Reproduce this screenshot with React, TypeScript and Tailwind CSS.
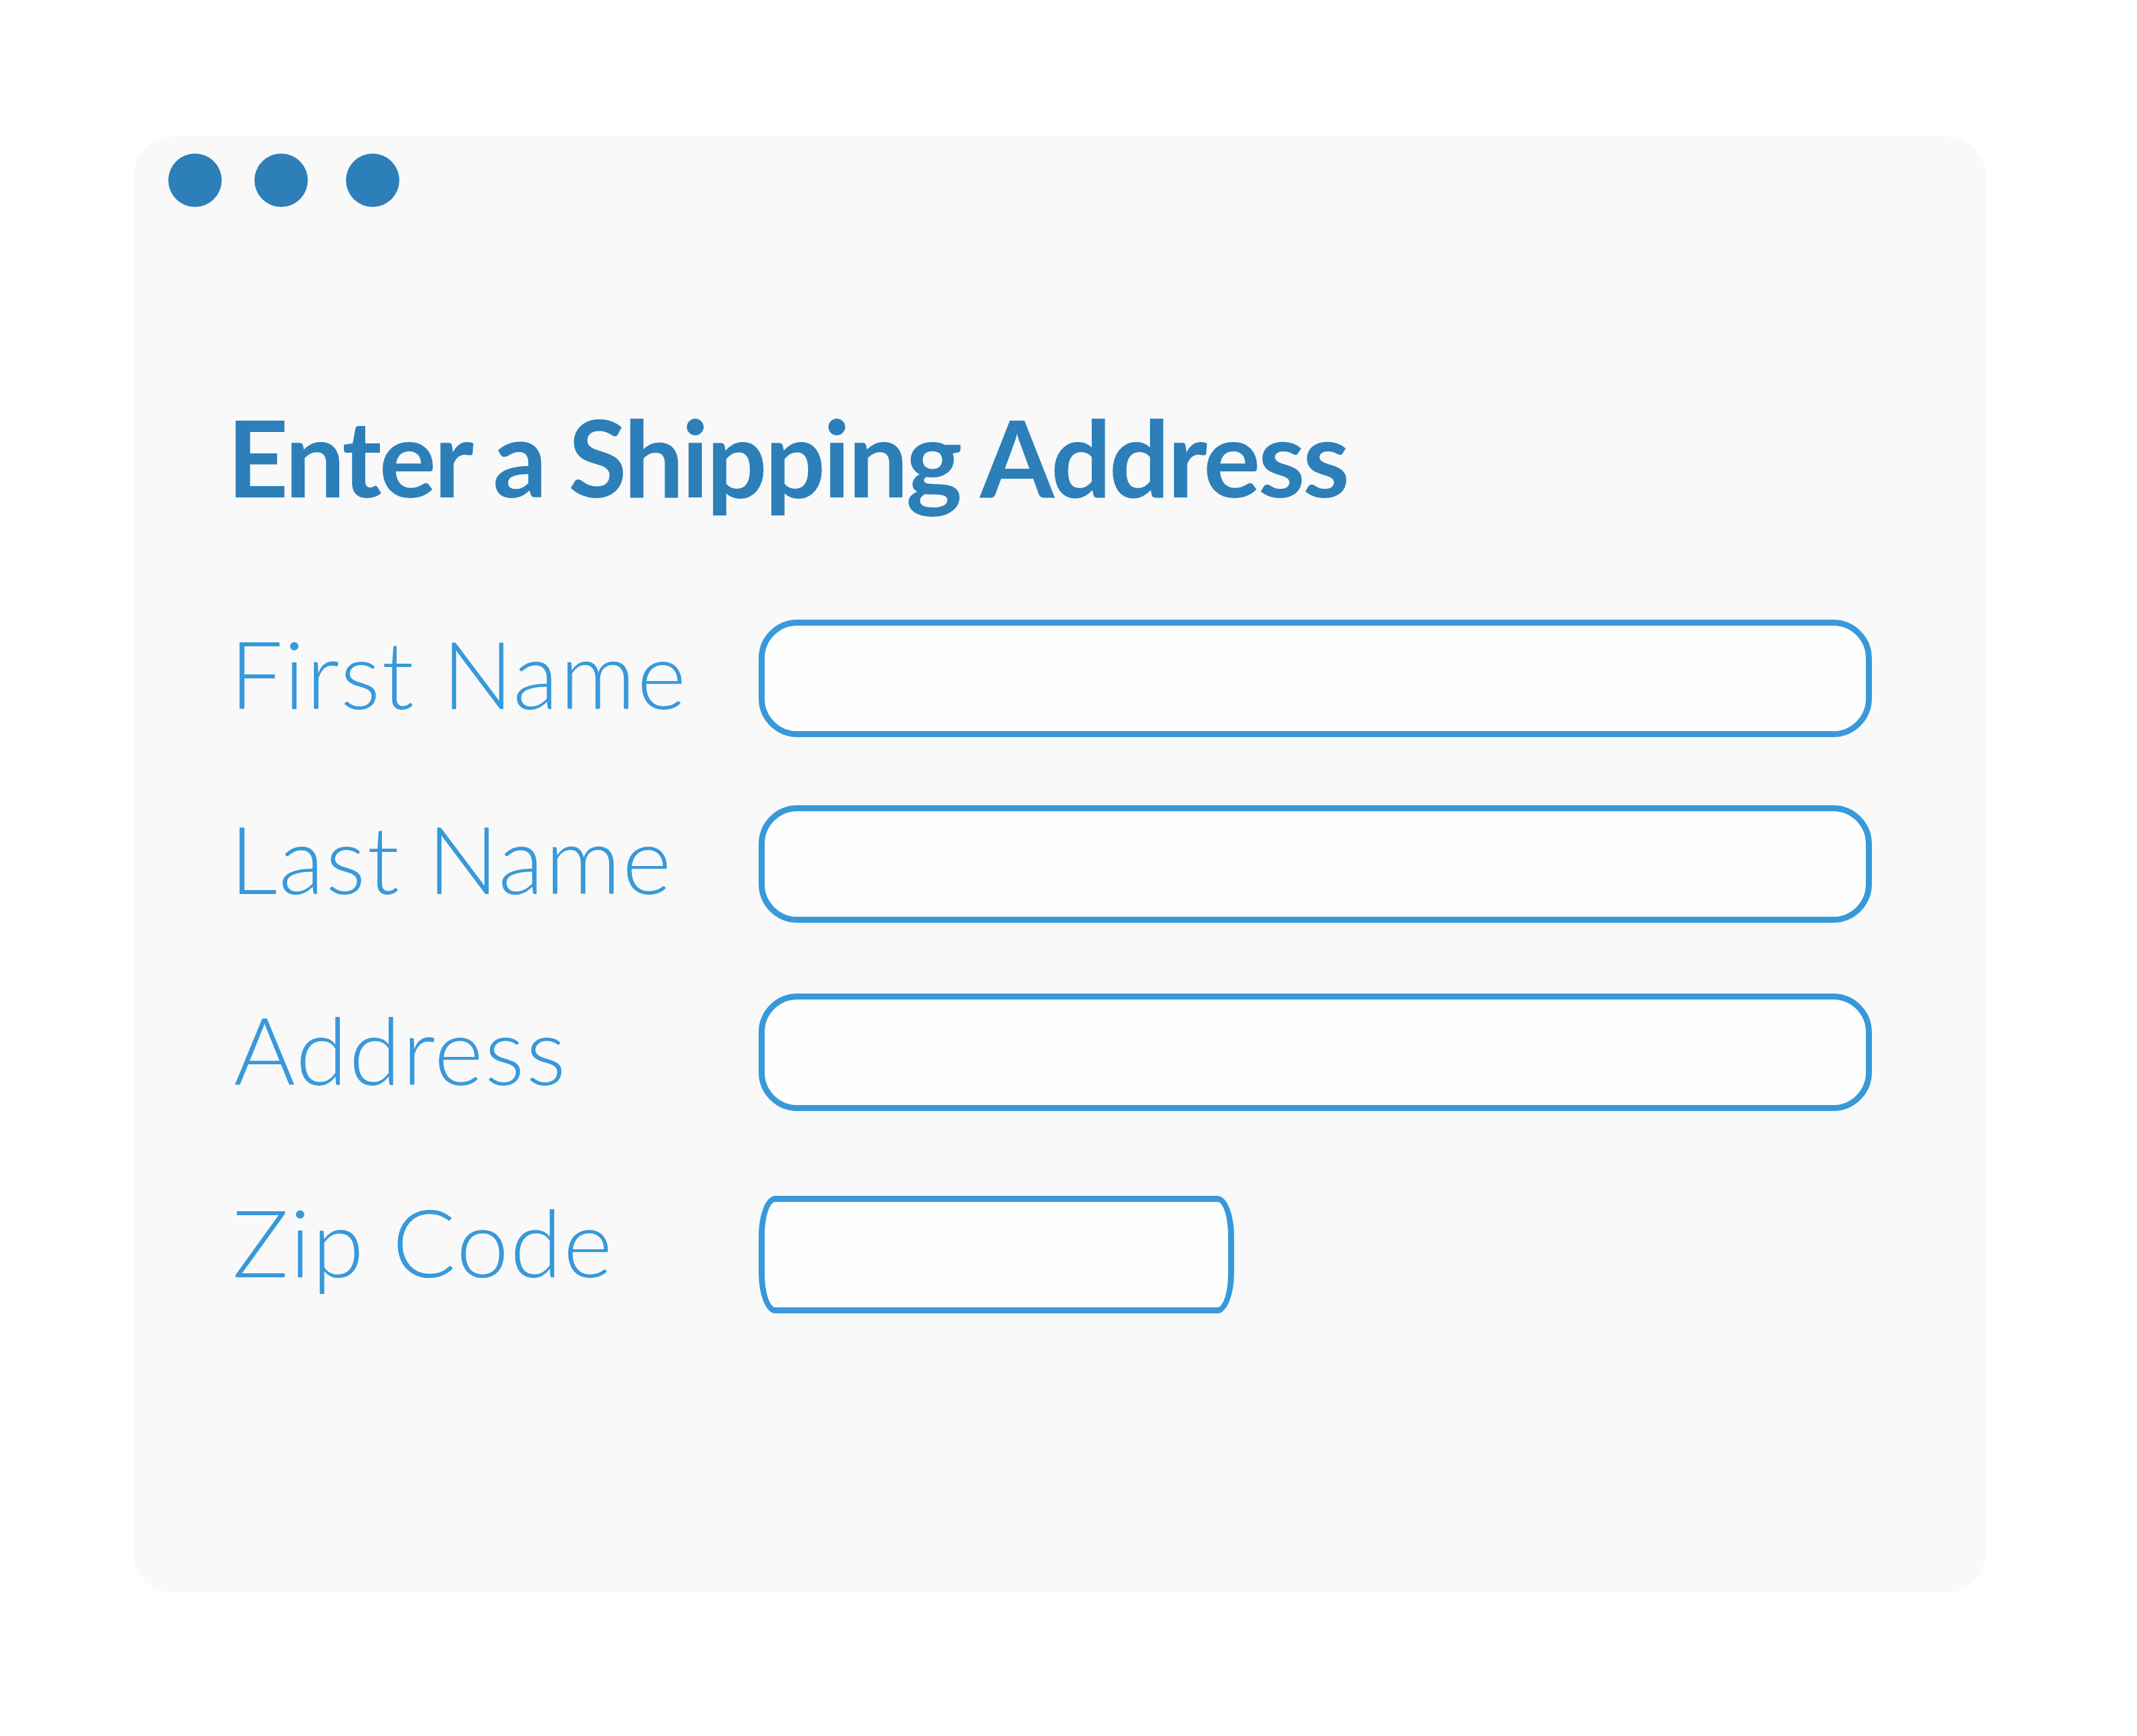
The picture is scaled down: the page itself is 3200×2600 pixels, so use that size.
export default function App() {
  const label =
    "w-[796px] shrink-0 font-['Lato',sans-serif] font-light text-[141px] leading-none tracking-[2px] text-[#3899da] whitespace-nowrap";
  const box =
    "h-[176px] border-[9px] border-[#3899da] bg-[#fefefe] box-border";
  return (
    <div className="w-[3200px] h-[2600px] bg-white pt-[204px] pl-[200px]">
      <div className="w-[2773px] h-[2181px] bg-[#f9f9f9] rounded-[58px] flex flex-col">
        <div className="flex items-center pt-[26px] pl-[52px]">
          <span className="w-[80px] h-[80px] rounded-full bg-[#2c7fb8]" />
          <span className="ml-[49px] w-[80px] h-[80px] rounded-full bg-[#2c7fb8]" />
          <span className="ml-[57px] w-[80px] h-[80px] rounded-full bg-[#2c7fb8]" />
        </div>
        <div className="pl-[140px] flex flex-col">
          <h1 className="mt-[293px] font-['Lato',sans-serif] font-bold text-[160px] leading-none tracking-[-3.5px] text-[#2c7fb8] whitespace-nowrap">
            Enter a Shipping Address
          </h1>
          <div className="mt-[165px] flex items-start">
            <div className={`${label} mt-[9px] pl-[4px]`}>First Name</div>
            <div className={`${box} w-[1667px] rounded-[58px]`} />
          </div>
          <div className="mt-[102px] flex items-start">
            <div className={`${label} mt-[8px] pl-[4px]`}>Last Name</div>
            <div className={`${box} w-[1667px] rounded-[58px]`} />
          </div>
          <div className="mt-[106px] flex items-start">
            <div className={`${label} mt-[12px] pl-[10px]`}>Address</div>
            <div className={`${box} w-[1667px] rounded-[58px]`} />
          </div>
          <div className="mt-[127px] flex items-start">
            <div className={`${label} -mt-[3px] pl-[8px]`}>Zip Code</div>
            <div className={`${box} w-[712px] rounded-[25px/60px]`} />
          </div>
        </div>
      </div>
    </div>
  );
}
